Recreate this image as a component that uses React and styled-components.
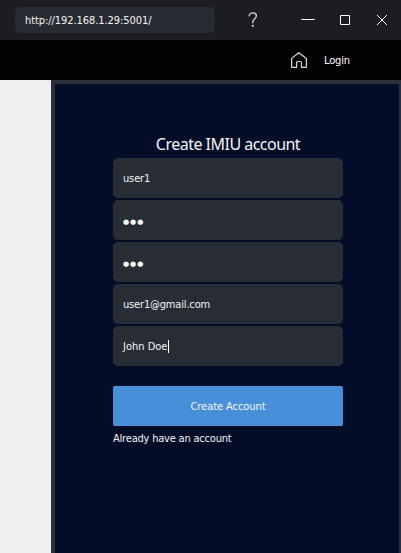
import React from "react";
import styled, { createGlobalStyle } from "styled-components";

const GlobalStyle = createGlobalStyle`
  * { box-sizing: border-box; }
  html, body { margin: 0; overflow: hidden; background: #efefef; }
`;

const Window = styled.div`
  width: 401px;
  height: 553px;
  display: flex;
  flex-direction: column;
  overflow: hidden;
  background: #efefef;
  color: #f4f4f4;
  font-family: "DejaVu Sans Condensed", "DejaVu Sans", Tahoma, sans-serif;
  font-stretch: condensed;
  font-size: 11px;
`;

const TitleBar = styled.header`
  flex: 0 0 40px;
  display: flex;
  align-items: center;
  padding-left: 15px;
  background: #1c1d21;
`;

const AddressBar = styled.div`
  flex: 0 0 200px;
  height: 26px;
  padding-left: 10px;
  border-radius: 5px;
  background: #272c33;
  line-height: 27px;
  white-space: nowrap;
`;

const Controls = styled.div`
  display: flex;
  align-items: center;
  margin-left: 19px;
`;

const ControlButton = styled.span`
  display: flex;
  align-items: center;
  justify-content: center;
  width: ${(p) => p.$width}px;
  height: 40px;
  margin-left: ${(p) => p.$gap || 0}px;
`;

const NavBar = styled.nav`
  flex: 0 0 40px;
  display: flex;
  align-items: center;
  padding-left: 290px;
  background: #020202;
`;

const LoginLink = styled.span`
  margin-left: 16px;
  padding-top: 2px;
  line-height: 20px;
  color: #fff;
`;

const Panel = styled.main`
  flex: 1;
  margin-left: 51px;
  padding: 50px 0 0 58px;
  border: solid #2b2f38;
  border-width: 4px 2px 0 4px;
  background: #030d27;
`;

const Form = styled.div`
  width: 230px;
  display: flex;
  flex-direction: column;
`;

const Heading = styled.h1`
  margin: 0;
  height: 24px;
  font: 400 16px/20px "Noto Sans", sans-serif;
  letter-spacing: -0.52px;
  text-align: center;
  white-space: nowrap;
`;

const Field = styled.div`
  display: flex;
  align-items: center;
  height: 40px;
  margin-bottom: 2px;
  padding: 1px 0 0 10px;
  border-radius: 5px;
  background: #282c34;
`;

const Label = styled.span`
  letter-spacing: ${(p) => p.$spacing || 0}px;
  white-space: nowrap;
`;

const Mask = styled.span`
  font: 7px/14px "DejaVu Sans", sans-serif;
  letter-spacing: 1px;
  padding-top: 2px;
  color: #fff;
`;

const Caret = styled.span`
  width: 1px;
  height: 13px;
  margin-left: 1px;
  background: #fff;
`;

const SubmitButton = styled.div`
  display: flex;
  align-items: center;
  justify-content: center;
  height: 40px;
  margin-top: 18px;
  border-radius: 2px;
  background: #4790d9;
`;

const AccountLink = styled.span`
  margin-top: 6px;
  line-height: 14px;
`;

export default function App() {
  return (
    <>
      <GlobalStyle />
      <Window>
        <TitleBar>
          <AddressBar><Label $spacing={-0.07}>http://192.168.1.29:5001/</Label></AddressBar>
          <Controls>
            <ControlButton $width={38}>
              <svg width="10" height="16" viewBox="0 0 10 16" fill="none" stroke="#d8d8d8" strokeWidth="1.3">
                <path d="M1.2 4.3V3.8C1.2 2 2.7.9 4.7.9S8.4 2 8.4 4C8.4 6.5 4.8 7 4.8 10V11.2" />
                <path d="M4.8 12.8V14.8" strokeWidth="1.8" />
              </svg>
            </ControlButton>
            <ControlButton $width={36} $gap={18}>
              <svg width="14" height="14" viewBox="0 0 14 14">
                <path d="M0.3 6.5H13.7" stroke="#fff" />
              </svg>
            </ControlButton>
            <ControlButton $width={38}>
              <svg width="10" height="10" viewBox="0 0 10 10" fill="none" stroke="#fff">
                <path d="M.5.5H9.5V9.5H.5Z" />
              </svg>
            </ControlButton>
            <ControlButton $width={36}>
              <svg width="10" height="10" viewBox="0 0 10 10" stroke="#fff">
                <path d="M0 0L10 10M10 0L0 10" />
              </svg>
            </ControlButton>
          </Controls>
        </TitleBar>
        <NavBar>
          <svg width="18" height="18" viewBox="0 0 18 18" fill="none" stroke="#d8d8d8" strokeWidth="1.2" strokeLinejoin="round">
            <path d="M1.6 7.4L8.8 1.8L16.4 7.4V16.3H11.5V11.6Q11.5 10.5 10.4 10.5H7.7Q6.6 10.5 6.6 11.6V16.3H1.6Z" />
          </svg>
          <LoginLink><Label $spacing={-0.15}>Login</Label></LoginLink>
        </NavBar>
        <Panel>
          <Form>
            <Heading>Create IMIU account</Heading>
            <Field><Label $spacing={-0.15}>user1</Label></Field>
            <Field><Mask>●●●</Mask></Field>
            <Field><Mask>●●●</Mask></Field>
            <Field><Label $spacing={-0.17}>user1@gmail.com</Label></Field>
            <Field><Label>John Doe</Label><Caret /></Field>
            <SubmitButton><Label $spacing={-0.07}>Create Account</Label></SubmitButton>
            <AccountLink><Label $spacing={-0.2}>Already have an account</Label></AccountLink>
          </Form>
        </Panel>
      </Window>
    </>
  );
}
